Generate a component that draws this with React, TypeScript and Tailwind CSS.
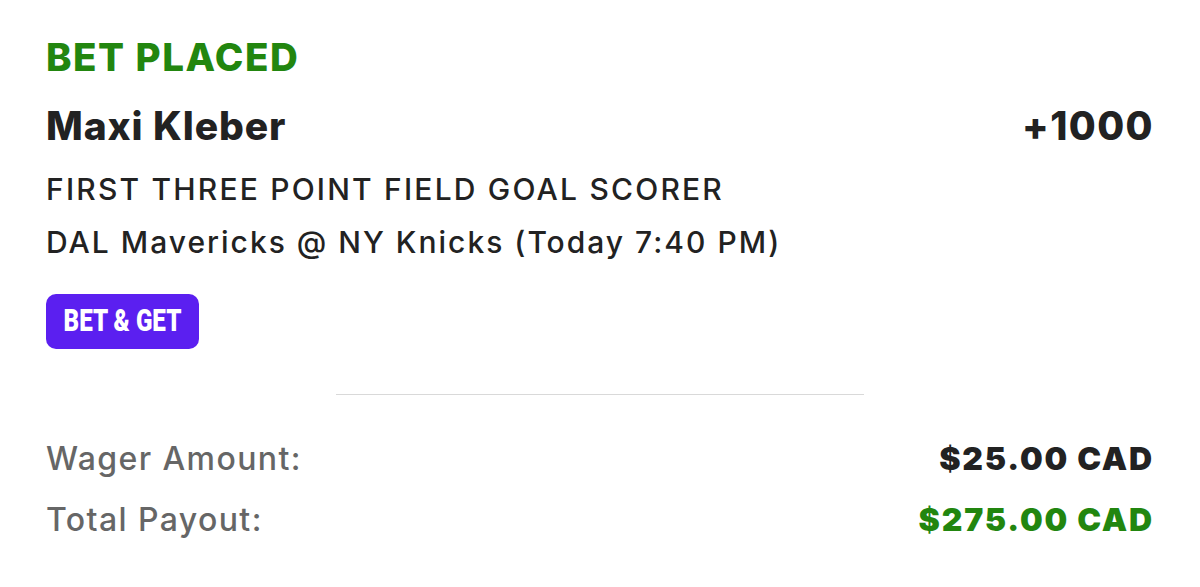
const inter = { fontFamily: "Inter, 'Noto Sans', sans-serif" };

export default function App() {
  return (
    <div className="h-[587px] w-[1200px] bg-white text-[#222]" style={inter}>
      <div className="px-[46px] pt-[35px]">
        <div className="text-[38.5px] font-extrabold leading-[44px] tracking-[1.5px] text-[#22860f]">
          BET PLACED
        </div>
        <div className="mt-[25px] flex items-center justify-between">
          <span className="text-[39px] font-extrabold leading-[44px] tracking-[0.9px]">Maxi Kleber</span>
          <span className="text-[39px] font-extrabold leading-[44px] tracking-[1.4px]">+1000</span>
        </div>
        <div className="mt-[15px] text-[30px] font-[450] leading-[53px] tracking-[2.2px]">
          FIRST THREE POINT FIELD GOAL SCORER
        </div>
        <div className="text-[30px] font-[450] leading-[53px] tracking-[2px]">
          DAL Mavericks @ NY Knicks (Today 7:40 PM)
        </div>
        <div className="mt-[25px] flex h-[55px] w-[153px] items-center justify-center rounded-[10px] bg-[#5b1ff0]">
          <span
            className="inline-block origin-center scale-x-[0.78] whitespace-nowrap text-[31px] font-black text-white"
            style={{ fontFamily: "Roboto, sans-serif" }}
          >
            BET &amp; GET
          </span>
        </div>
        <div className="mx-auto mt-[45px] h-px w-[528px] bg-[#d9d9d9]" />
        <div className="mt-[33px] flex items-center justify-between">
          <span className="text-[32px] font-[450] leading-[61px] tracking-[1.4px] text-[#666]">Wager Amount:</span>
          <span className="text-[32px] font-black leading-[61px] tracking-[1.8px]">$25.00 CAD</span>
        </div>
        <div className="flex items-center justify-between">
          <span className="text-[32px] font-[450] leading-[61px] tracking-[1.4px] text-[#666]">Total Payout:</span>
          <span className="text-[32px] font-black leading-[61px] tracking-[1.8px] text-[#22860f]">
            $275.00 CAD
          </span>
        </div>
      </div>
    </div>
  );
}
